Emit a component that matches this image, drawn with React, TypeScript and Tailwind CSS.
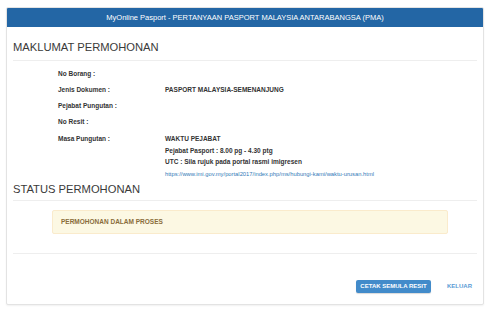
const rows = [
  { label: "No Borang :", value: "" },
  { label: "Jenis Dokumen :", value: "PASPORT MALAYSIA-SEMENANJUNG" },
  { label: "Pejabat Pungutan :", value: "" },
  { label: "No Resit :", value: "" },
];

export default function App() {
  return (
    <div className="min-h-[312px] w-[500px] bg-white pl-[6px] pt-[7px] font-['Liberation_Sans',Arial,sans-serif] text-[#333]">
      <div className="h-[298px] w-[478px] overflow-hidden rounded-[2px] border border-[#e3e3e3] bg-white shadow-[0_1px_2px_rgba(0,0,0,0.06)]">
        <div className="flex h-[19px] items-center justify-center bg-[#2366a5] text-[7.5px] text-white">
          MyOnline Pasport - PERTANYAAN PASPORT MALAYSIA ANTARABANGSA (PMA)
        </div>

        <div className="px-[6px]">
          <h2 className="mt-[13px] border-b border-[#eeeeee] pb-[6px] text-[11.2px] leading-[14px] text-[#3a3a3a]">
            MAKLUMAT PERMOHONAN
          </h2>

          <div className="mt-[5px] pl-[45px] text-[6.5px] font-bold">
            {rows.map((row) => (
              <div key={row.label} className="flex h-[16px] items-center">
                <span className="w-[107px]">{row.label}</span>
                <span>{row.value}</span>
              </div>
            ))}
            <div className="mt-[3px] flex">
              <span className="w-[107px] leading-[11.5px]">Masa Pungutan :</span>
              <div className="leading-[11.5px]">
                <p>WAKTU PEJABAT</p>
                <p>Pejabat Pasport : 8.00 pg - 4.30 ptg</p>
                <p>UTC : Sila rujuk pada portal rasmi imigresen</p>
                <a href="#" className="text-[5.8px] font-normal text-[#337ab7]">
                  https://www.imi.gov.my/portal2017/index.php/ms/hubungi-kami/waktu-urusan.html
                </a>
              </div>
            </div>
          </div>

          <h2 className="mt-[2px] border-b border-[#eeeeee] pb-[4px] text-[11.2px] leading-[14px] text-[#3a3a3a]">
            STATUS PERMOHONAN
          </h2>

          <div className="ml-[39px] mt-[9px] flex h-[24px] w-[396px] items-center rounded-[2px] border border-[#faebcc] bg-[#fcf8e3] pl-[8px] text-[6.5px] font-bold text-[#8a6d3b]">
            PERMOHONAN DALAM PROSES
          </div>

          <div className="mt-[19px] border-b border-[#eeeeee]" />

          <div className="mt-[26px] flex items-center justify-end gap-[16px] pr-[5px]">
            <button className="flex h-[13px] w-[75px] items-center justify-center rounded-[2px] bg-[#428bca] text-[6px] font-bold text-white shadow-[0_1px_1px_rgba(0,0,0,0.15)]">
              CETAK SEMULA RESIT
            </button>
            <span className="text-[6px] font-bold text-[#5b9bd5]">KELUAR</span>
          </div>
        </div>
      </div>
    </div>
  );
}
